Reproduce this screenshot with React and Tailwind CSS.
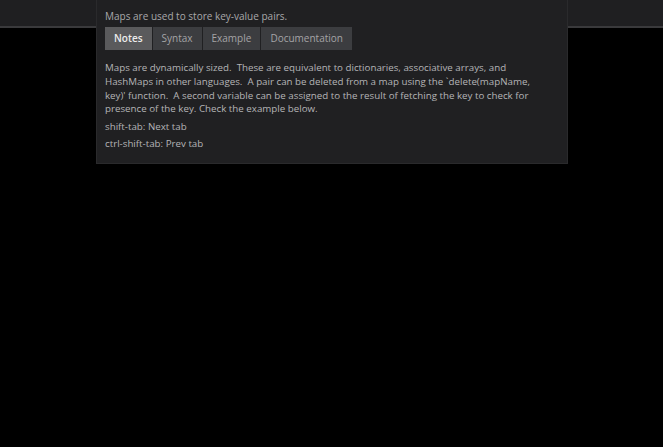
import React, { useState } from 'react';

const tabs = ['Notes', 'Syntax', 'Example', 'Documentation'];

export default function App() {
  const [active, setActive] = useState('Notes');

  return (
    <div className="relative w-[663px] h-[447px] bg-black overflow-hidden" style={{ fontFamily: '"Open Sans", "Liberation Sans", sans-serif' }}>
      <div className="h-[28px] bg-[#1f1f21] border-b-2 border-[#3a3a3c]" />

      <div className="absolute left-[96px] top-0 w-[472px] h-[164px] bg-[#202022] border-x border-b border-[#2a2a2c] px-[8px] pt-[9px]">
        <p className="text-[10px] leading-[14px] text-[#a8a8aa]">Maps are used to store key-value pairs.</p>

        <div className="flex gap-px mt-[4px]">
          {tabs.map(t => (
            <button
              key={t}
              onClick={() => setActive(t)}
              className={`h-[23px] px-[9px] text-[10px] ${active === t ? 'bg-[#5a5a5c] text-[#ececec] font-semibold' : 'bg-[#3c3d40] text-[#a4a4a6]'}`}
            >
              {t}
            </button>
          ))}
        </div>

        <div className="mt-[11px] text-[9.75px] leading-[13.75px] text-[#b4b4b6] pr-[14px]">
          <p>
            Maps are dynamically sized.&nbsp; These are equivalent to dictionaries, associative arrays, and HashMaps in other languages.&nbsp; A pair can be deleted from a map using the `delete(mapName, key)' function.&nbsp; A second variable can be assigned to the result of fetching the key to check for presence of the key. Check the example below.
          </p>
          <p className="mt-[4px]">shift-tab: Next tab</p>
          <p className="mt-[3.5px]">ctrl-shift-tab: Prev tab</p>
        </div>
      </div>
    </div>
  );
}
